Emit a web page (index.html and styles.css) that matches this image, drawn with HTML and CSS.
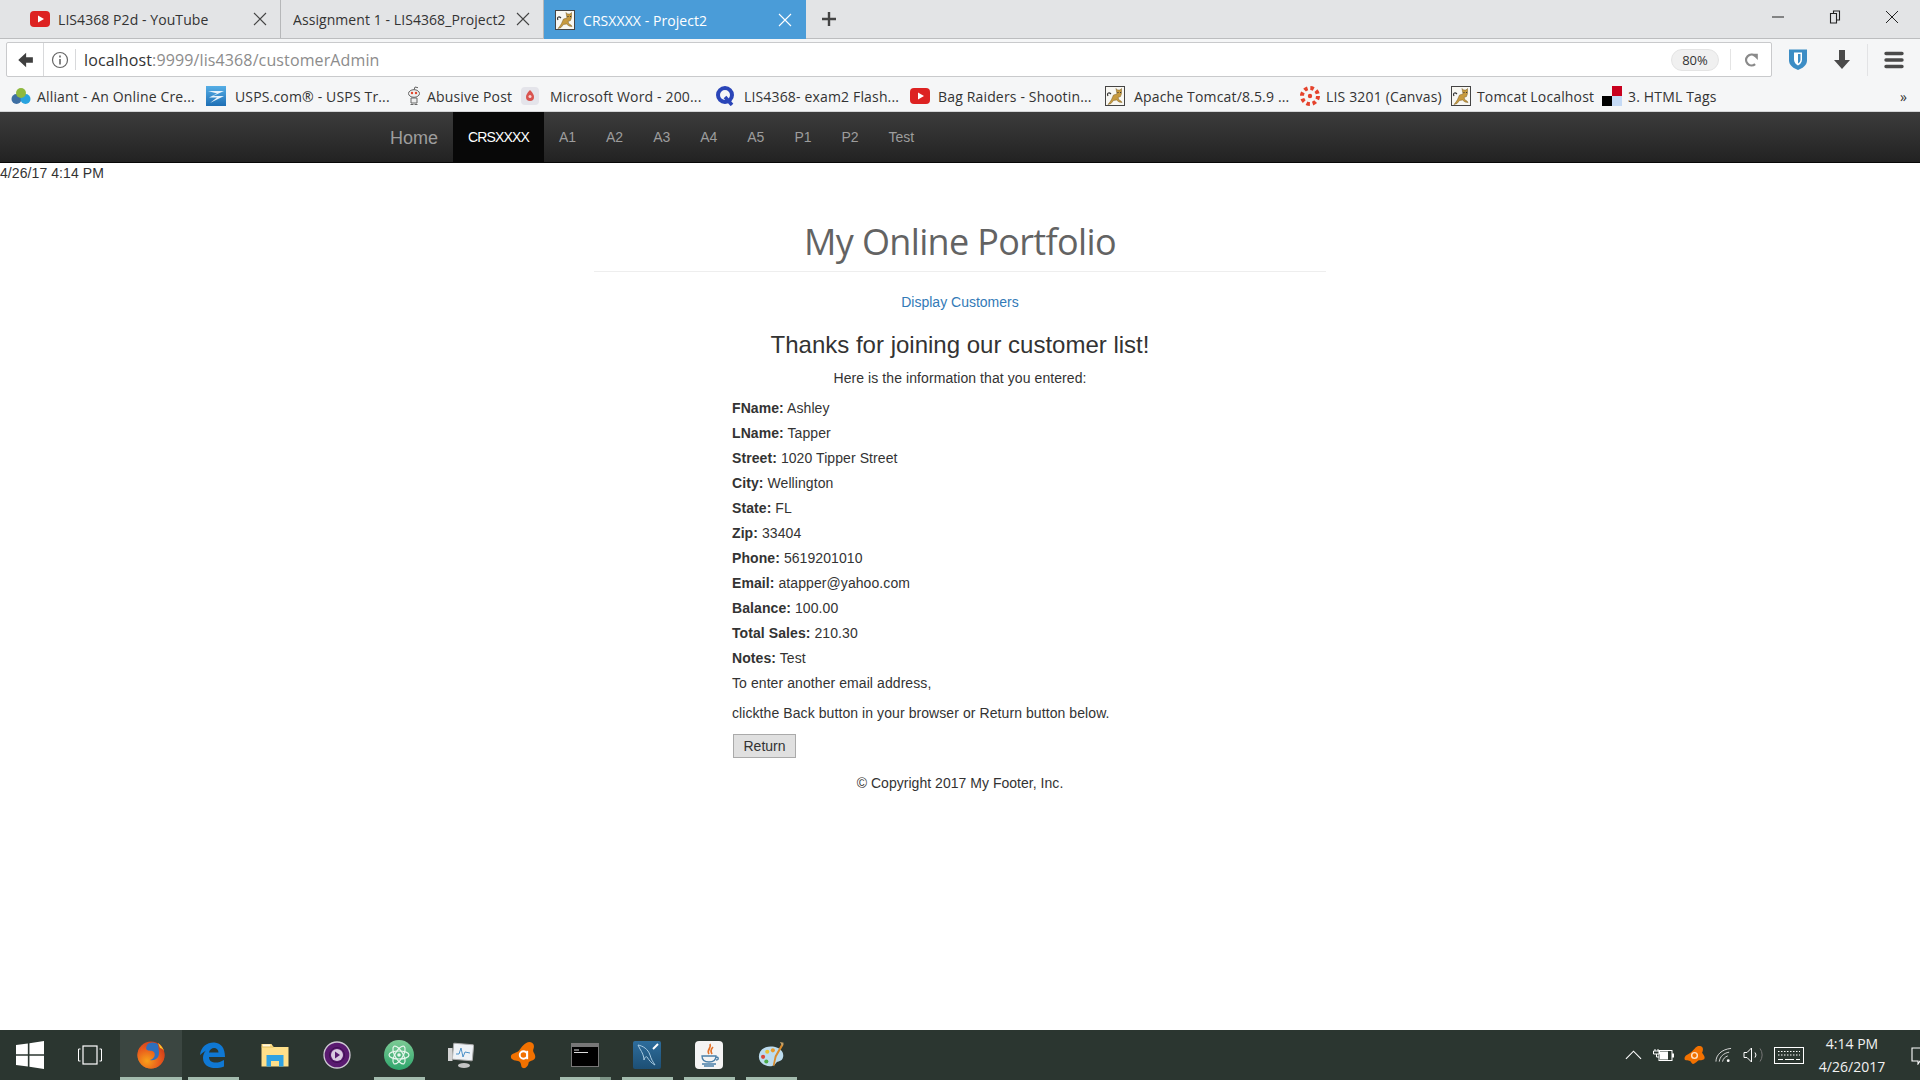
FILE: index.html
```html
<!DOCTYPE html>
<html lang="en">
<head>
<meta charset="utf-8">
<title>CRSXXXX - Project2</title>
<link rel="stylesheet" href="styles.css">
</head>
<body>
<svg class="defs" width="0" height="0" aria-hidden="true">
  <defs>
    <linearGradient id="uspsg" x1="0" y1="0" x2="0" y2="1"><stop offset="0" stop-color="#55aee6"/><stop offset="1" stop-color="#1e6fb5"/></linearGradient>
    <radialGradient id="ffg" cx=".35" cy=".7" r=".8"><stop offset="0" stop-color="#f7a11a"/><stop offset=".6" stop-color="#e8591c"/><stop offset="1" stop-color="#c8381a"/></radialGradient>
    <linearGradient id="atomg" x1="0" y1="0" x2="0" y2="1"><stop offset="0" stop-color="#7dcb95"/><stop offset="1" stop-color="#2ea56c"/></linearGradient>
    <linearGradient id="myg" x1="0" y1="0" x2="0" y2="1"><stop offset="0" stop-color="#2e6d9c"/><stop offset="1" stop-color="#1d4f74"/></linearGradient>
    <symbol id="yt" viewBox="0 0 20 20"><rect x="0" y="2" width="20" height="16" rx="4" fill="#dd2222"/><path d="M8 6.500l6 3.500-6 3.500z" fill="#fff"/></symbol>
    <symbol id="cat" viewBox="0 0 20 20"><rect x=".5" y=".5" width="19" height="19" fill="#f8f7f2" stroke="#444"/><path d="M11 2.500l1.500 1.500h2.500l1.500-1.500v5l-1 3-2.500 1 1 2.500 2 1 1 1.500-3-.5-2.500-2-3 .5-2.500 3-3 1 2-2.500 1.500-2.500 2-4.500 3.500-1z" fill="#c79a3e" stroke="#7a5f26" stroke-width=".5"/><path d="M12.500 6h1v1h-1zM15 6h1v1h-1z" fill="#333"/><path d="M3 10c-1.500-3 1-4 3-2" fill="none" stroke="#333" stroke-width="1.100"/></symbol>
    <symbol id="x" viewBox="0 0 14 14"><path d="M1 1l12 12M13 1L1 13" fill="none" stroke="currentColor" stroke-width="1.100"/></symbol>
  </defs>
</svg>

<header class="chrome">
  <div class="tabstrip">
    <div class="tab tab-one">
      <svg class="fav"><use href="#yt"/></svg><span class="tab-title">LIS4368 P2d - YouTube</span>
      <svg class="tab-x"><use href="#x"/></svg>
    </div>
    <div class="tab tab-two">
      <span class="tab-title">Assignment 1 - LIS4368_Project2</span>
      <svg class="tab-x"><use href="#x"/></svg>
    </div>
    <div class="tab tab-active">
      <svg class="fav"><use href="#cat"/></svg><span class="tab-title">CRSXXXX - Project2</span>
      <svg class="tab-x"><use href="#x"/></svg>
    </div>
    <svg class="plus" viewBox="0 0 16 16"><path d="M8 1v14M1 8h14" stroke="#444" stroke-width="2.400" fill="none"/></svg>
    <div class="winctl">
      <svg viewBox="0 0 14 14"><path d="M1 7h12" stroke="#222" stroke-width="1"/></svg>
      <svg viewBox="0 0 14 14"><path d="M5.500 3V1h6v9H8.500M2.500 3.500h6v9.500h-6z" stroke="#222" stroke-width="1.100" fill="none"/></svg>
      <svg viewBox="0 0 14 14"><path d="M1 1l12 12M13 1L1 13" stroke="#222" stroke-width="1" fill="none"/></svg>
    </div>
  </div>
  <div class="toolbar">
    <div class="urlbar">
      <div class="url-back">
        <svg viewBox="0 0 16 16"><path d="M9 1.500L2 8l7 6.500V10.500h6v-5H9z" fill="#3f3f3f"/></svg>
      </div>
      <div class="url-info">
        <svg viewBox="0 0 18 18"><circle cx="9" cy="9" r="7.500" fill="none" stroke="#666" stroke-width="1.200"/><path d="M9 4.500v2M9 8v5.500" stroke="#666" stroke-width="1.600"/></svg>
      </div>
      <div class="url-text">localhost<span class="url-dim">:9999/lis4368/customerAdmin</span></div>
      <div class="zoom-pill">80%</div>
      <div class="url-reload">
        <svg viewBox="0 0 16 20"><path d="M12 5.500A6 6 0 1 0 12 14.500" fill="none" stroke="#8a8a8a" stroke-width="2.600"/><path d="M8 3h7v7z" fill="#8a8a8a"/></svg>
      </div>
    </div>
    <svg class="tool-bw" viewBox="0 0 20 22"><path d="M1 1h18v11c0 5-5 8-9 9.500C6 20 1 17 1 12z" fill="#3c8dc5"/><path d="M6 4h8v7c0 3-2 5-4 6-2-1-4-3-4-6z" fill="#fff"/><path d="M10 5.500h2.500V11c0 2-1 3-2.500 4z" fill="#3c8dc5"/></svg>
    <svg class="tool-dl" viewBox="0 0 18 20"><path d="M6 0h6v10h5l-8 9-8-9h5z" fill="#4a4a4a"/></svg>
    <span class="tool-sep"></span>
    <svg class="tool-menu" viewBox="0 0 20 18"><path d="M2 2.500h16M2 9h16M2 15.500h16" stroke="#4a4a4a" stroke-width="3.400" stroke-linecap="round"/></svg>
  </div>
  <div class="bookmarks">
    <div class="bm bm-1"><svg class="bm-ic" viewBox="0 0 20 20"><circle cx="5.500" cy="13" r="5" fill="#3e6fa3"/><circle cx="14.500" cy="13" r="5" fill="#29a3df"/><circle cx="10" cy="7" r="5" fill="#8fb93f"/></svg><span>Alliant - An Online Cre...</span></div>
    <div class="bm bm-2"><svg class="bm-ic" viewBox="0 0 20 20"><rect width="20" height="20" fill="url(#uspsg)"/><path d="M2 5h16L7 10l11 0-14 7 7-5.500H3l8-4z" fill="#e8f3fb"/></svg><span>USPS.com® - USPS Tr...</span></div>
    <div class="bm bm-3"><svg class="bm-ic" viewBox="0 0 20 20"><path d="M10 4l1-3 3 .7" fill="none" stroke="#666"/><ellipse cx="10" cy="7.500" rx="5.500" ry="3.800" fill="#eee" stroke="#666"/><circle cx="8" cy="7" r="1.200" fill="#e0452a"/><circle cx="12" cy="7" r="1.200" fill="#e0452a"/><path d="M7 12h6v5H7zM6.500 18.500h3M10.500 18.500h3" stroke="#666" fill="#eee"/></svg><span>Abusive Post</span></div>
    <div class="bm bm-4"><svg class="bm-ic" viewBox="0 0 20 20"><rect x="1" y="1" width="18" height="18" rx="4" fill="#e4e4ea"/><path d="M10 4c3 3 4 5 4 7a4 4 0 0 1-8 0c0-2 1-4 4-7z" fill="#d9534f"/><circle cx="10" cy="10.500" r="1.500" fill="#f5d5d5"/></svg><span>Microsoft Word - 200...</span></div>
    <div class="bm bm-5"><svg class="bm-ic" viewBox="0 0 20 20"><circle cx="10" cy="9" r="7" fill="none" stroke="#2a45b8" stroke-width="4"/><path d="M10 11l7 8" stroke="#2a45b8" stroke-width="3.500"/></svg><span>LIS4368- exam2 Flash...</span></div>
    <div class="bm bm-6"><svg class="bm-ic" viewBox="0 0 20 20"><use href="#yt"/></svg><span>Bag Raiders - Shootin...</span></div>
    <div class="bm bm-7"><svg class="bm-ic" viewBox="0 0 20 20"><use href="#cat"/></svg><span>Apache Tomcat/8.5.9 ...</span></div>
    <div class="bm bm-8"><svg class="bm-ic" viewBox="0 0 20 20"><circle cx="10" cy="10" r="8" fill="none" stroke="#e5432d" stroke-width="4" stroke-dasharray="3.500 2.800"/><circle cx="10" cy="10" r="2.200" fill="#e5432d"/></svg><span>LIS 3201 (Canvas)</span></div>
    <div class="bm bm-9"><svg class="bm-ic" viewBox="0 0 20 20"><use href="#cat"/></svg><span>Tomcat Localhost</span></div>
    <div class="bm bm-10"><svg class="bm-ic" viewBox="0 0 20 20"><rect x="10" width="10" height="10" fill="#c8001e"/><rect y="10" width="10" height="10" fill="#000"/><rect x="10" y="10" width="10" height="10" fill="#c5daf5"/></svg><span>3. HTML Tags</span></div>
    <span class="bm-more">»</span>
  </div>
</header>

<nav class="navbar">
  <div class="nav-container">
    <a class="brand" href="#">Home</a>
    <ul class="nav-list">
      <li><a class="active" href="#">CRSXXXX</a></li>
      <li><a href="#">A1</a></li>
      <li><a href="#">A2</a></li>
      <li><a href="#">A3</a></li>
      <li><a href="#">A4</a></li>
      <li><a href="#">A5</a></li>
      <li><a href="#">P1</a></li>
      <li><a href="#">P2</a></li>
      <li><a href="#">Test</a></li>
    </ul>
  </div>
</nav>

<main class="page">
  <div class="date">4/26/17 4:14 PM</div>
  <div class="content">
    <div class="page-header"><h1>My Online Portfolio</h1></div>
    <p class="center link-line"><a href="#">Display Customers</a></p>
    <h2>Thanks for joining our customer list!</h2>
    <p class="center here">Here is the information that you entered:</p>
    <div class="details">
      <div class="row"><b>FName:</b> Ashley</div>
      <div class="row"><b>LName:</b> Tapper</div>
      <div class="row"><b>Street:</b> 1020 Tipper Street</div>
      <div class="row"><b>City:</b> Wellington</div>
      <div class="row"><b>State:</b> FL</div>
      <div class="row"><b>Zip:</b> 33404</div>
      <div class="row"><b>Phone:</b> 5619201010</div>
      <div class="row"><b>Email:</b> atapper@yahoo.com</div>
      <div class="row"><b>Balance:</b> 100.00</div>
      <div class="row"><b>Total Sales:</b> 210.30</div>
      <div class="row"><b>Notes:</b> Test</div>
      <p class="para">To enter another email address,</p>
      <p class="para">clickthe Back button in your browser or Return button below.</p>
      <button class="return" type="button">Return</button>
    </div>
    <p class="center footer">© Copyright 2017 My Footer, Inc.</p>
  </div>
</main>

<footer class="taskbar">
  <div class="tb-item tb-first"><svg viewBox="0 0 26 26"><path d="M0 3.800L11 2.300V12.300H0zM12.500 2L26 0V12.300H12.500zM0 13.800H11V23.700L0 22.200zM12.500 13.800H26V26L12.500 24z" fill="#fff"/></svg></div>
  <div class="tb-item tb-first"><svg viewBox="0 0 28 28"><rect x="7" y="5" width="14" height="18" fill="none" stroke="#fff" stroke-width="1.200"/><path d="M4.500 8H2.500v12h2M23.500 8h2v12h-2" fill="none" stroke="#fff"/></svg></div>
  <div class="tb-item tb-active tb-on"><svg viewBox="0 0 28 28"><circle cx="14" cy="14" r="13.500" fill="url(#ffg)"/><circle cx="15.500" cy="11" r="9.500" fill="#2f6fbd"/><path d="M21 2c4 2 6.500 7 6.500 12 0 7.500-6 13.500-13.500 13.500S.500 21.500.500 14c0-3 1-6 3-8 0 2 .5 3 1 3.500C6 6 8 4 11 3 8.500 6 9 8 10 9c2 1 5 0 7 2 2 3 0 7-4 8 5 1 9-2 9-7 0-4-1-7-1-10z" fill="url(#ffg)"/><path d="M21 2c3 2 5 5 6 8-1-2-3-3-4-3z" fill="#f9c52b"/></svg></div>
  <div class="tb-item tb-on"><svg viewBox="0 0 28 28"><path fill-rule="evenodd" d="M1 14C2 5 9 1 15.500 1.500 22 2 26 7 26 16H10c0 6.500 8.500 7 15 3v6.500c-9 3.500-21 1.500-21-8.500 0-3 1-5.500 3-7.500C5 11 3 12 1 14zM10 11.500h9.500c0-6-8.500-6-9.500 0z" fill="#0f78d4"/></svg></div>
  <div class="tb-item"><svg viewBox="0 0 28 24"><path d="M.5 1h10l2 3h15v19.500H.5z" fill="#ffe08a"/><path d="M2 1.500h7v2.500H2z" fill="#fff7dd"/><path d="M.5 4h12" stroke="#e0bb5c"/><path d="M5.500 23.500V12h17v11.500h-4.500V18h-8v5.500z" fill="#2fa2e3"/></svg></div>
  <div class="tb-item"><svg viewBox="0 0 28 28"><circle cx="14" cy="14" r="13" fill="#5a1a70" stroke="#cfc9d4" stroke-width="1.300"/><circle cx="14" cy="14" r="7.500" fill="none" stroke="#3f0f52" stroke-width="1"/><circle cx="14" cy="14" r="6" fill="#d9cbe0"/><path d="M12 10.500l5 3.500-5 3.500z" fill="#5a1a70"/></svg></div>
  <div class="tb-item tb-on"><svg class="tb-lg" viewBox="0 0 30 30"><circle cx="15" cy="15" r="15" fill="url(#atomg)"/><g fill="none" stroke="#eaf7ef" stroke-width="1.200"><ellipse cx="15" cy="15" rx="10" ry="4"/><ellipse cx="15" cy="15" rx="10" ry="4" transform="rotate(60 15 15)"/><ellipse cx="15" cy="15" rx="10" ry="4" transform="rotate(120 15 15)"/></g><circle cx="15" cy="15" r="1.800" fill="#eaf7ef"/></svg></div>
  <div class="tb-item"><svg viewBox="0 0 28 28"><rect x="6" y="3" width="20" height="16" rx="1" fill="#eef2f6" stroke="#aaa" transform="rotate(5 16 11)"/><path d="M9 13l3 0 2-6 2 9 2-5 5 1" fill="none" stroke="#4a90c8"/><ellipse cx="17" cy="24.500" rx="6" ry="2.500" fill="#c4c4c4"/><rect x="1" y="7" width="4.500" height="13" fill="#d4d4d4"/></svg></div>
  <div class="tb-item"><svg viewBox="0 0 28 30"><path d="M21 1c4 0 6 4 4 8-1 3 3 5 2 9-1 3-5 3-7 5 0 3-3 7-6 6-3-1-1-5-4-7-3-1-9-1-9-5 0-4 7-4 9-7 2-3 6-9 11-9z" fill="#f27100"/><circle cx="14.500" cy="15" r="4" fill="none" stroke="#fff" stroke-width="2"/><path d="M18.500 10.500v9" stroke="#fff" stroke-width="2"/></svg></div>
  <div class="tb-item tb-on tb-multi"><svg viewBox="0 0 28 24"><rect width="28" height="24" fill="#777"/><rect x="1" y="4" width="26" height="19" fill="#000"/><path d="M3 7h5M3 9.500h14" stroke="#ddd"/></svg></div>
  <div class="tb-item tb-on"><svg viewBox="0 0 28 28"><rect width="28" height="28" rx="2" fill="url(#myg)"/><path d="M5 4c5 1 10 4 12 10 1 4 3 7 5 10-4-2-6-5-8-8-1-1-2 0-3 3 0-4-2-8-4-11z" fill="none" stroke="#a9cbe2" stroke-width="1"/><path d="M20 8l5-5" stroke="#fff" stroke-width="2"/></svg></div>
  <div class="tb-item tb-on"><svg class="tb-lg" viewBox="0 0 30 30"><rect x="1" y="1" width="28" height="28" rx="4" fill="#f4f4f4"/><path d="M16 4c2 4-4 6-1 10M19 7c-2 2-3 4-1 7" fill="none" stroke="#e2722a" stroke-width="1.700"/><path d="M8 16h14c0 4-2 6-7 6s-7-2-7-6zM22 17c3 0 3 3 0 3M8 24h14M10 26h10" fill="none" stroke="#4a7fa8" stroke-width="1.300"/></svg></div>
  <div class="tb-item tb-on"><svg viewBox="0 0 30 30"><path d="M2 17C2 9 9 5 17 6c8 1 12 6 11 11-1 6-6 4-8 7-2 3-7 4-11 2-4-1-7-5-7-9z" fill="#bcdcee"/><circle cx="6.500" cy="17" r="2.200" fill="#d9473a"/><circle cx="11" cy="11.500" r="2.200" fill="#e8c232"/><circle cx="17" cy="10" r="2.200" fill="#e89a2a"/><circle cx="10" cy="22" r="2.200" fill="#4cab4a"/><path d="M27 2l1.500 2-7.500 13-2.500 10-1.500-1 2-10z" fill="#d98b2b"/><path d="M24.500 1l4 1-1 4z" fill="#c4a26a"/></svg></div>
  <div class="tray">
    <svg class="tr-chev" viewBox="0 0 18 10"><path d="M1 9l8-8 8 8" fill="none" stroke="#fff" stroke-width="1.200"/></svg>
    <svg class="tr-batt" viewBox="0 0 22 14"><path d="M3 1v2M6 1v2M1.500 3h6v3h-6zM4.500 6v3H7" fill="none" stroke="#fff"/><rect x="7" y="2.500" width="13" height="10" fill="none" stroke="#fff"/><rect x="8" y="3.500" width="8" height="8" fill="#fff"/><rect x="20" y="5.500" width="2" height="4" fill="#fff"/></svg>
    <svg class="tr-avast" viewBox="0 0 22 20"><path d="M17 0c4 1 3 5 2 7 1 2 4 4 2 7-3 2-5 0-7 2-2 2-5 4-6 2-1-2-2-3-6-3-2 0-2-3 0-5 3-2 6-3 8-6 2-2 4-5 7-4z" fill="#f27100"/><circle cx="11" cy="10" r="3" fill="none" stroke="#ffe3c8" stroke-width="1.500"/></svg>
    <svg class="tr-wifi" viewBox="0 0 18 16"><path d="M1 15C1 8 7 2 17 1M4.500 15C5 10 9 6 15 5M8 15c.5-3 2.500-5 5.500-6" fill="none" stroke="#ddd" stroke-width="1"/><circle cx="14" cy="14" r="1.500" fill="#fff"/></svg>
    <svg class="tr-vol" viewBox="0 0 20 16"><path d="M1 5.500h3L8.500 1v14L4 10.500H1z" fill="none" stroke="#fff"/><path d="M12 5.500a4 4 0 0 1 0 5" fill="none" stroke="#fff"/><path d="M17 1.500a11 11 0 0 1 0 13" fill="none" stroke="#777"/></svg>
    <svg class="tr-kbd" viewBox="0 0 30 17"><rect x=".5" y=".5" width="29" height="16" fill="none" stroke="#fff"/><path d="M4 4.500h22M4 8h22" stroke="#fff" stroke-dasharray="1.500 1.500"/><path d="M4 12.500h5M11 12.500h9M22 12.500h4" stroke="#fff"/></svg>
    <div class="clock"><span>4:14 PM</span><span>4/26/2017</span></div>
    <svg class="tr-note" viewBox="0 0 20 18"><path d="M1 1h18v13H9l-2 3v-3H1z" fill="none" stroke="#fff" stroke-width="1.100"/></svg>
  </div>
</footer>
</body>
</html>
```

FILE: styles.css
```css
* { box-sizing: border-box; }
html, body { margin: 0; padding: 0; height: 100%; }
body {
  width: 1920px;
  height: 1080px;
  overflow: hidden;
  display: flex;
  flex-direction: column;
  font-family: "Liberation Sans", Arial, sans-serif;
  font-size: 14px;
  line-height: 20px;
  color: #333;
  background: #fff;
}
.defs { position: absolute; }

/* Browser chrome */
.chrome { font-family: "Open Sans", "Noto Sans", sans-serif; flex: none; }
.tabstrip {
  height: 39px;
  display: flex;
  align-items: stretch;
  background: #e3e4e6;
  border-bottom: 1px solid #bcbdbf;
}
.tab {
  display: flex;
  align-items: center;
  font-size: 14px;
  letter-spacing: 0.07px;
  color: #333;
  border-right: 1px solid #b6b7b9;
  white-space: nowrap;
  overflow: hidden;
}
.tab-one { width: 281px; padding: 2px 13px 0 30px; }
.tab-two { width: 263px; padding: 2px 13px 0 12px; }
.tab-active { width: 262px; padding: 2px 14px 0 11px; background: #4a9cd8; color: #fff; border-right: 0; margin-bottom: -1px; }
.fav { width: 20px; height: 20px; flex: none; margin-right: 8px; margin-top: -2px; }
.tab-title { flex: 1; overflow: hidden; }
.tab-two .tab-title { margin-right: 8px; }
.tab-x { width: 14px; height: 14px; flex: none; color: #444; margin-top: -2px; }
.tab-active .tab-x { color: #fff; }
.plus { width: 16px; height: 16px; align-self: center; margin: 0 0 0 15px; flex: none; }
.winctl { margin-left: auto; display: flex; align-items: flex-start; gap: 43px; padding: 10px 21px 0 0; }
.winctl svg { width: 14px; height: 14px; display: block; }

.toolbar {
  height: 41px;
  background: #f5f6f7;
  display: flex;
  align-items: center;
  padding: 3px 0 3px 6px;
}
.urlbar {
  width: 1766px;
  height: 35px;
  flex: none;
  background: #fff;
  border: 1px solid #c9cacc;
  border-radius: 2px;
  display: flex;
  align-items: center;
}
.url-back { width: 37px; height: 100%; display: flex; align-items: center; justify-content: center; border-right: 1px solid #d8d9db; flex: none; }
.url-back svg { width: 18px; height: 18px; }
.url-info { width: 32px; height: 21px; display: flex; align-items: center; justify-content: center; border-right: 1px solid #d8d9db; flex: none; }
.url-info svg { width: 18px; height: 18px; }
.url-text { flex: 1; padding: 1px 0 0 8px; font-size: 16px; letter-spacing: 0.12px; color: #333; }
.url-dim { color: #8c8c8c; }
.zoom-pill {
  width: 48px;
  height: 22px;
  border-radius: 11px;
  background: #f0f0f0;
  border: 1px solid #e4e4e4;
  font-size: 13px;
  line-height: 20px;
  text-align: center;
  color: #333;
  flex: none;
}
.url-reload { width: 41px; height: 21px; margin-left: 11px; border-left: 1px solid #e4e4e4; display: flex; align-items: center; justify-content: center; flex: none; }
.url-reload svg { width: 15px; height: 18px; }
.tool-bw { width: 20px; height: 23px; margin-left: 16px; flex: none; }
.tool-dl { width: 18px; height: 20px; margin-left: 25px; flex: none; }
.tool-sep { width: 1px; height: 32px; margin-left: 16px; background: #e2e3e5; flex: none; }
.tool-menu { width: 20px; height: 18px; margin-left: 16px; flex: none; }

.bookmarks {
  height: 32px;
  background: #f5f6f7;
  border-bottom: 1px solid #d4d5d7;
  display: flex;
  align-items: center;
  padding: 3px 0 0 11px;
  font-size: 14px;
  letter-spacing: 0.16px;
  color: #333;
  white-space: nowrap;
}
.bm { display: flex; align-items: center; flex: none; }
.bm-ic { width: 20px; height: 20px; flex: none; margin-right: 6px; margin-top: -2px; }
.bm-1 { width: 195px; }
.bm-2 { width: 198px; }
.bm-3 { width: 116px; }
.bm-4, .bm-5, .bm-6, .bm-7 { width: 195px; }
.bm-8, .bm-9 { width: 151px; }
.bm-10 { width: 150px; }
.bm-2 .bm-ic, .bm-5 .bm-ic, .bm-7 .bm-ic { margin-right: 9px; }
.bm-3 .bm-ic { margin-right: 3px; }
.bm-4 .bm-ic { margin-right: 10px; }
.bm-6 .bm-ic { margin-right: 8px; }
.bm-more { margin-left: auto; padding-right: 13px; font-size: 14px; }

/* Site navbar */
.navbar {
  height: 51px;
  flex: none;
  background: linear-gradient(to bottom, #3c3c3c 0, #222 100%);
  border-bottom: 1px solid #080808;
}
.nav-container { width: 1170px; margin: 0 auto; padding-left: 15px; display: flex; }
.brand {
  font-size: 18px;
  line-height: 20px;
  color: #9d9d9d;
  text-decoration: none;
  padding: 16px 15px 14px 0;
}
.nav-list { display: flex; list-style: none; margin: 0; padding: 0; }
.nav-list a {
  display: block;
  padding: 15px;
  height: 50px;
  color: #9d9d9d;
  letter-spacing: -0.03px;
  text-decoration: none;
}
.nav-list a.active { color: #fff; background: #080808; letter-spacing: -0.85px; }

/* Page */
.page { flex: 1; min-height: 0; }
.date { height: 20px; letter-spacing: 0.08px; }
.content { width: 732px; margin: 0 auto; }
.page-header { margin-top: 39px; padding-bottom: 9px; border-bottom: 1px solid #eee; }
h1 {
  margin: 0;
  font-family: "Open Sans", "Noto Sans", sans-serif;
  font-size: 36px;
  line-height: 40px;
  font-weight: 400;
  letter-spacing: -0.65px;
  color: #636363;
  text-align: center;
}
.center { text-align: center; margin: 0; }
.link-line { margin-top: 20px; }
.link-line a { color: #337ab7; text-decoration: none; }
h2 {
  margin: 20px 0 0;
  font-size: 24px;
  line-height: 26px;
  font-weight: 400;
  text-align: center;
  color: #333;
}
.here { margin-top: 10px; letter-spacing: 0.08px; }
.details { width: 456px; margin: 10px auto 0; letter-spacing: 0.08px; }
.row { margin-bottom: 5px; }
.row b { font-weight: 700; }
.para { margin: 0 0 10px; }
.return {
  display: block;
  width: 63px;
  height: 24px;
  margin: 11px 0 0 1px;
  padding: 0;
  font: 14px/20px "Liberation Sans", Arial, sans-serif;
  color: #333;
  background: #e0e0e0;
  border: 1px solid #aaa;
}
.footer { margin-top: 15px; letter-spacing: 0.03px; }

/* Windows taskbar */
.taskbar {
  height: 50px;
  flex: none;
  background: #2b3630;
  display: flex;
  align-items: stretch;
  position: relative;
}
.tb-item {
  width: 62px;
  height: 50px;
  flex: none;
  display: flex;
  align-items: center;
  justify-content: center;
  position: relative;
}
.tb-first { width: 60px; }
.tb-item svg { width: 28px; height: 28px; }
.tb-item svg.tb-lg { width: 30px; height: 30px; }
.tb-active { background: #3b4641; }
.tb-on::after {
  content: "";
  position: absolute;
  left: 6px;
  right: 5px;
  bottom: 0;
  height: 3px;
  background: #a3bcae;
}
.tb-active::after { left: 0; right: 0; }
.tb-multi::after { background: linear-gradient(to right, #a3bcae 78%, #7c9486 78%); }
.tray { margin-left: auto; display: flex; align-items: center; color: #fff; }
.tray svg { flex: none; }
.tr-chev { width: 17px; height: 10px; margin-right: 10px; }
.tr-batt { width: 22px; height: 14px; margin-right: 10px; }
.tr-avast { width: 21px; height: 19px; margin-right: 10px; }
.tr-wifi { width: 17px; height: 16px; margin-right: 11px; }
.tr-vol { width: 20px; height: 16px; margin-right: 11px; }
.tr-kbd { width: 30px; height: 17px; margin-right: 13px; }
.clock {
  width: 70px;
  display: flex;
  flex-direction: column;
  align-items: center;
  font-family: "Open Sans", "Noto Sans", sans-serif;
  font-size: 14px;
  line-height: 23px;
  color: #f2f2f2;
  white-space: nowrap;
  margin-top: -1px;
}
.tr-note { width: 20px; height: 18px; margin: 2px -11px 0 24px; }
```
